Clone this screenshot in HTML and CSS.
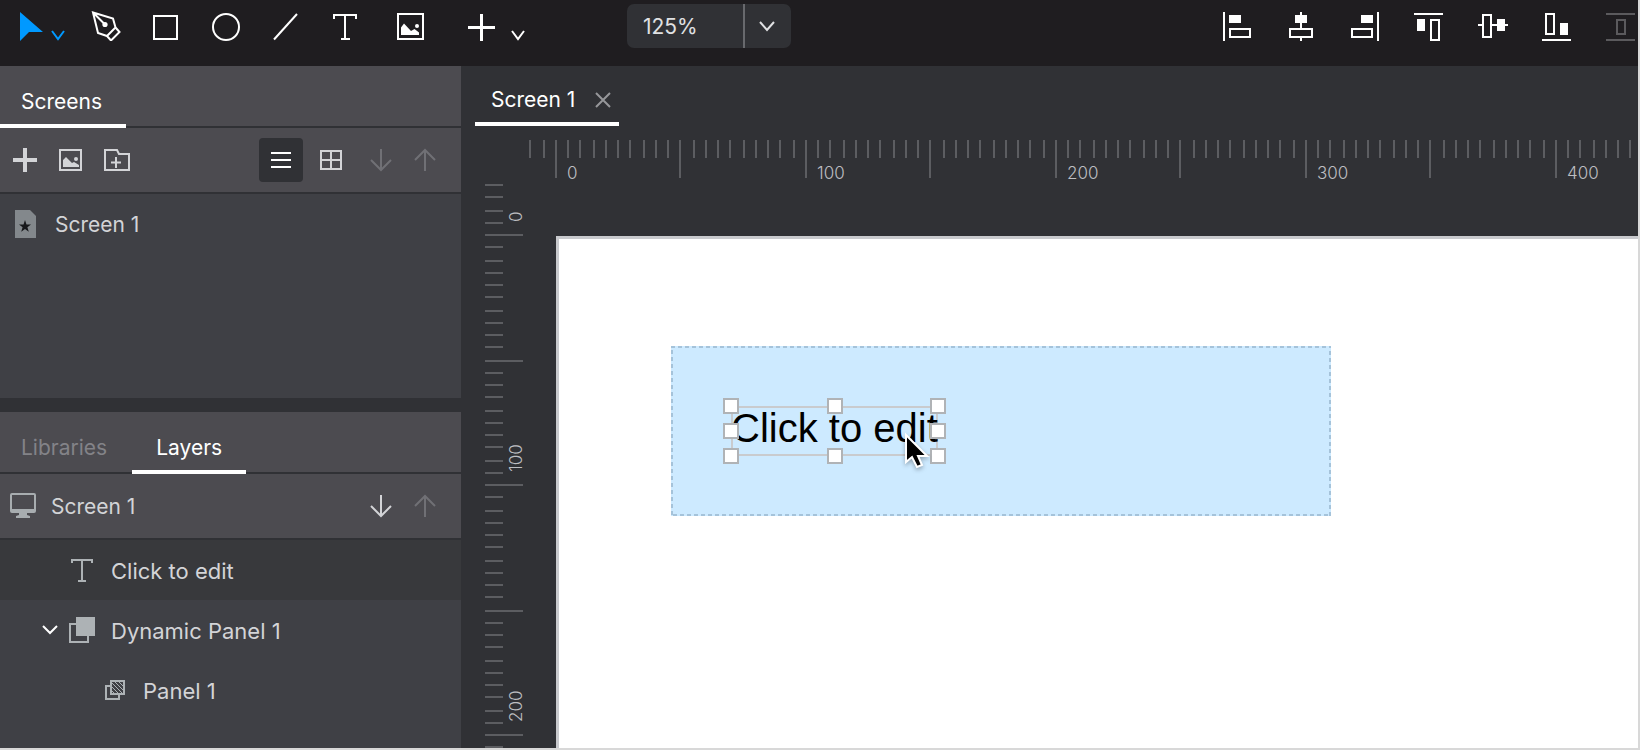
FILE: index.html
```
<!DOCTYPE html>
<html lang="en">
<head>
    <meta charset="UTF-8">
    <meta name="viewport" content="width=device-width, initial-scale=1.0">
    <title>Screen 1</title>
    <link rel="stylesheet" href="styles.css">
</head>
<body>
    <header class="topbar">
        <button class="tool tool-select" aria-label="Select">
            <svg width="30" height="30"><path class="fill" d="M2 1 25 21H11L2 30z"/></svg>
            <svg width="14" height="30"><path d="M1 20l6 8 6-8"/></svg>
        </button>
        <button class="tool" aria-label="Pen">
            <svg width="30" height="30"><path d="M2 1.500 22 7.500 24.500 16.500 16 25 7 22zM2 1.500 13.500 13M24.500 16.500l4 4.500-8.500 8.500-4-4.500"/><circle class="fill" cx="14" cy="13.500" r="2.600"/></svg>
        </button>
        <button class="tool" aria-label="Rectangle">
            <svg width="30" height="30"><rect x="3" y="5" width="23" height="23"/></svg>
        </button>
        <button class="tool" aria-label="Ellipse">
            <svg width="30" height="30"><circle cx="15" cy="16" r="13"/></svg>
        </button>
        <button class="tool" aria-label="Line">
            <svg width="30" height="30"><path d="M3 28.500 26 3"/></svg>
        </button>
        <button class="tool" aria-label="Text">
            <svg width="30" height="30"><path d="M3 8V4h22v4M14 4v24M10 28h9"/></svg>
        </button>
        <button class="tool tool-image" aria-label="Image">
            <svg width="30" height="30"><rect x="3" y="3" width="25" height="25"/><path class="fill" d="M6 24v-7.500l3-4 7 7.500 3.500-2 4.500 3.500V24z"/><circle class="fill" cx="22" cy="15" r="2"/></svg>
        </button>
        <button class="tool tool-insert" aria-label="Insert">
            <svg width="30" height="30"><path class="thick" d="M1 16.500h27M14.500 3v27"/></svg>
            <svg width="14" height="30"><path d="M1 20l6 8 6-8"/></svg>
        </button>
        <div class="zoom">
            <select aria-label="Zoom">
                <option>50%</option>
                <option>100%</option>
                <option selected>125%</option>
                <option>200%</option>
            </select>
            <span class="zoom-arrow"><svg width="16" height="12"><path d="M1 2l7 8 7-8"/></svg></span>
        </div>
        <div class="align">
            <button aria-label="Align left"><svg width="30" height="30"><path d="M2 1v29"/><path class="fill" d="M7 4h12v8H7z"/><rect x="8" y="18" width="20" height="8"/></svg></button>
            <button aria-label="Align center"><svg width="30" height="30"><path d="M15 1v16M15 27v3"/><path class="fill" d="M9 4h12v8H9z"/><rect x="4" y="18" width="22" height="8"/></svg></button>
            <button aria-label="Align right"><svg width="30" height="30"><path d="M28 1v29"/><path class="fill" d="M11 4h12v8H11z"/><rect x="2" y="18" width="20" height="8"/></svg></button>
            <button aria-label="Align top"><svg width="30" height="30"><path d="M0 3h29"/><path class="fill" d="M3 8h8v12H3z"/><rect x="17" y="9" width="8" height="20"/></svg></button>
            <button aria-label="Align middle"><svg width="30" height="30"><path d="M0 14h4M14 14h16"/><path class="fill" d="M19 8h8v12h-8z"/><rect x="5" y="4" width="8" height="22"/></svg></button>
            <button aria-label="Align bottom"><svg width="30" height="30"><path d="M0 29h29"/><path class="fill" d="M18 12h8v12h-8z"/><rect x="4" y="3" width="8" height="20"/></svg></button>
            <button aria-label="Distribute" disabled><svg width="30" height="30"><path d="M0 3h29M0 29h29"/><rect x="11" y="9" width="8" height="14"/></svg></button>
        </div>
    </header>

    <div class="main">
        <aside class="sidebar">
            <section class="panel screens">
                <div class="tabs">
                    <button class="tab active">Screens</button>
                </div>
                <div class="bar">
                    <button aria-label="Add screen"><svg width="24" height="24"><path class="heavy" d="M0 12h24M12 0v24"/></svg></button>
                    <button aria-label="Add image"><svg width="24" height="24"><rect x="1" y="2" width="21" height="20"/><path class="fill" d="M4 19v-7l3-3 6 6 2-1 5 3v2z"/><circle class="fill" cx="17" cy="11" r="2"/></svg></button>
                    <button aria-label="Add folder"><svg width="26" height="24"><path d="M1 2h12l2 4h10v16H1zM12 9v11M7 14.500h10"/></svg></button>
                    <div class="bar-right">
                        <button class="active" aria-label="List view"><svg width="20" height="20"><path d="M0 3h20M0 10h20M0 17h20"/></svg></button>
                        <button aria-label="Grid view"><svg width="22" height="22"><path d="M1 2h20v18H1zM11 2v18M1 11h20"/></svg></button>
                        <div class="arrows">
                            <button aria-label="Move down" disabled><svg width="22" height="24"><path d="M11 1v21M1 12l10 10 10-10"/></svg></button>
                            <button aria-label="Move up" disabled><svg width="22" height="24"><path d="M11 23V2M1 12 11 2l10 10"/></svg></button>
                        </div>
                    </div>
                </div>
                <ul class="list">
                    <li class="row row-screen">
                        <svg width="21" height="28"><path class="page" d="M0 0h15l6 6v22H0z"/><path class="star" d="M10 10l1.500 4.500h4.500l-3.600 2.700 1.400 4.500-3.800-2.700-3.800 2.700 1.400-4.500L4 14.500h4.500z"/></svg>
                        <span>Screen 1</span>
                    </li>
                </ul>
            </section>

            <section class="panel layers">
                <div class="tabs">
                    <button class="tab">Libraries</button>
                    <button class="tab active">Layers</button>
                </div>
                <div class="bar bar-layers">
                    <svg class="monitor" width="26" height="26"><rect x="1" y="1" width="24" height="18" rx="1"/><path class="fill" d="M1 16h24v3H1zM9 19h8v3l3 1v2H6v-2l3-1z"/></svg>
                    <span>Screen 1</span>
                    <div class="bar-right">
                        <div class="arrows">
                            <button aria-label="Move layer down"><svg width="22" height="24"><path d="M11 1v21M1 12l10 10 10-10"/></svg></button>
                            <button aria-label="Move layer up" disabled><svg width="22" height="24"><path d="M11 23V2M1 12 11 2l10 10"/></svg></button>
                        </div>
                    </div>
                </div>
                <ul class="list">
                    <li class="row row-text selected">
                        <svg width="24" height="24"><path d="M2 5V2h20v3M12 2v21M8 23h8"/></svg>
                        <span>Click to edit</span>
                    </li>
                    <li class="row row-dynamic">
                        <button class="toggle" aria-label="Collapse"><svg width="16" height="12"><path d="M1 2l7 7 7-7"/></svg></button>
                        <svg width="26" height="26"><path d="M7 7H1v18h18v-6"/><path class="fill" d="M7 0h19v19H7z"/></svg>
                        <span>Dynamic Panel 1</span>
                    </li>
                    <li class="row row-state">
                        <svg width="20" height="20"><path d="M5 6H1v13h13v-4"/><rect x="6" y="1" width="13" height="13"/><path class="hatch" d="M6 2l12 12M10 2l9 9M14 2l5 5M6 6l8 8M6 10l4 4"/></svg>
                        <span>Panel 1</span>
                    </li>
                </ul>
            </section>
        </aside>

        <main class="workspace">
            <div class="doc-tabs">
                <div class="doc-tab">
                    <span>Screen 1</span>
                    <button aria-label="Close"><svg width="16" height="16"><path d="M1 1l14 14M15 1 1 15"/></svg></button>
                </div>
            </div>
            <svg class="ruler ruler-x" id="ruler-x"></svg>
            <svg class="ruler ruler-y" id="ruler-y"></svg>
            <div class="stage">
                <div class="paper">
                    <div class="dynamic-panel">
                        <svg class="outline" width="100%" height="100%"><rect width="100%" height="100%"/></svg>
                        <div class="text-widget">
                            Click to edit
                            <i class="handle top left"></i>
                            <i class="handle top center"></i>
                            <i class="handle top right"></i>
                            <i class="handle middle left"></i>
                            <i class="handle middle right"></i>
                            <i class="handle bottom left"></i>
                            <i class="handle bottom center"></i>
                            <i class="handle bottom right"></i>
                        </div>
                        <svg class="pointer" width="28" height="40"><path d="M2 3v27l6-5 5 10 5-2-4-9h9z"/></svg>
                    </div>
                </div>
            </div>
        </main>
    </div>

    <script src="script.js"></script>
</body>
</html>
```
FILE: styles.css
```
* {
    margin: 0;
    padding: 0;
    box-sizing: border-box;
}

body {
    font-family: 'Inter', sans-serif;
    font-size: 21px;
    line-height: 28px;
    height: 100vh;
    display: flex;
    flex-direction: column;
    overflow: hidden;
    background: #303135;
    color: #d3d4d7;
    border-right: 2px solid #d8d8d8;
    border-bottom: 2px solid #d8d8d8;
}

button {
    border: none;
    background: none;
    color: inherit;
    font: inherit;
    cursor: pointer;
}

ul {
    list-style: none;
}

svg {
    display: block;
    flex: none;
    fill: none;
    stroke: currentColor;
    stroke-width: 2;
}

svg .fill {
    fill: currentColor;
    stroke: none;
}

svg .thick {
    stroke-width: 3;
}

svg .heavy {
    stroke-width: 4;
}

/* top toolbar */
.topbar {
    display: flex;
    align-items: center;
    flex: none;
    height: 66px;
    padding-bottom: 14px;
    background: #1f1d20;
    color: #fff;
    overflow: hidden;
}

.tool {
    display: flex;
    justify-content: center;
    flex: none;
    width: 60px;
}

.tool-select {
    width: 76px;
    gap: 3px;
    padding-left: 7px;
    color: #0099ff;
}

.tool-image {
    width: 68px;
}

.tool-insert {
    width: 84px;
    gap: 14px;
    padding-left: 20px;
}

.zoom {
    position: relative;
    flex: none;
    width: 164px;
    height: 44px;
    margin-left: 99px;
    color: #e0e1e3;
}

.zoom select {
    appearance: none;
    width: 100%;
    height: 100%;
    padding: 2px 16px 0;
    border: none;
    border-radius: 7px;
    background: #303135;
    color: inherit;
    font: inherit;
}

.zoom-arrow {
    position: absolute;
    top: 0;
    right: 0;
    width: 48px;
    height: 100%;
    display: flex;
    align-items: center;
    justify-content: center;
    padding-right: 2px;
    border-left: 2px solid #68696d;
    pointer-events: none;
}

.align {
    display: flex;
    margin-left: auto;
    margin-right: -15px;
}

.align button {
    display: flex;
    justify-content: center;
    width: 64px;
}

.align button:disabled {
    color: #5b5a5d;
}

.main {
    display: flex;
    flex: 1;
    min-height: 0;
}

/* left sidebar */
.sidebar {
    display: flex;
    flex-direction: column;
    flex: none;
    width: 461px;
    gap: 14px;
}

.panel {
    background: #3f4045;
}

.screens {
    height: 332px;
}

.layers {
    flex: 1;
}

.tabs {
    display: flex;
    gap: 4px;
    height: 62px;
    background: #4c4b50;
    border-bottom: 2px solid #303135;
}

.tab {
    height: 62px;
    padding: 14px 21px 0;
    border-bottom: 4px solid transparent;
    color: #838388;
}

.tab.active {
    border-bottom-color: #fff;
    color: #fff;
}

.screens .tab {
    padding-right: 24px;
}

.layers .tab.active {
    padding: 14px 24px 0;
}

.bar {
    display: flex;
    align-items: center;
    gap: 2px;
    height: 66px;
    padding: 0 14px 0 3px;
    background: #4c4b50;
    border-bottom: 2px solid #303135;
}

.bar button {
    display: flex;
    align-items: center;
    justify-content: center;
    width: 44px;
    height: 44px;
    border-radius: 4px;
}

.bar button.active {
    background: #303135;
    color: #fff;
}

.bar button:disabled {
    color: #707075;
}

.bar-right {
    display: flex;
    gap: 6px;
    margin-left: auto;
}

.arrows {
    display: flex;
}

.bar-layers {
    gap: 15px;
    padding-left: 10px;
}

.bar-layers span,
.row span {
    padding-top: 2px;
}

.monitor {
    color: #a8adb0;
}

.row {
    display: flex;
    align-items: center;
    height: 60px;
}

.row svg {
    color: #adb2b5;
}

.layers .row {
    font-size: 22px;
}

.row-screen {
    gap: 19px;
    padding-left: 15px;
}

.row-screen .page {
    fill: #83888c;
    stroke: none;
}

.row-screen .star {
    fill: #17181b;
    stroke: none;
}

.row-text {
    gap: 17px;
    padding-left: 70px;
}

.row-dynamic {
    gap: 16px;
    padding-left: 42px;
}

.row-state {
    gap: 18px;
    padding-left: 105px;
}

.row.selected {
    background: #38393c;
}

.row .toggle {
    margin-right: -5px;
}

.row .toggle svg {
    color: #fff;
}

.row .hatch {
    stroke-width: 1;
}

/* canvas */
.workspace {
    display: grid;
    grid-template-columns: 24px 42px 1fr;
    grid-template-rows: 60px 14px 44px 1fr;
    flex: 1;
    min-width: 0;
}

.doc-tabs {
    grid-column: 1 / -1;
    padding-left: 14px;
    display: flex;
}

.doc-tab {
    display: flex;
    align-items: center;
    gap: 20px;
    height: 60px;
    padding: 12px 8px 0 16px;
    border-bottom: 4px solid #fff;
    color: #fff;
}

.doc-tab svg {
    color: #96979a;
}

.ruler {
    width: 100%;
    height: 100%;
    overflow: hidden;
    stroke: #5c5d61;
}

.ruler text {
    fill: #bdbec1;
    stroke: none;
    font-size: 17px;
    font-weight: 300;
}

.ruler-x {
    grid-column: 3;
    grid-row: 3;
}

.ruler-y {
    grid-column: 2;
    grid-row: 4;
}

.stage {
    grid-column: 3;
    grid-row: 4;
    padding: 52px 0 0 29px;
    min-height: 0;
    overflow: hidden;
}

.paper {
    position: relative;
    height: 100%;
    background: #fff;
    border-top: 3px solid #c8c9cd;
    border-left: 3px solid #c8c9cd;
}

.dynamic-panel {
    position: absolute;
    left: 112px;
    top: 107px;
    width: 660px;
    height: 170px;
    background: #cdeaff;
}

.outline rect {
    stroke: #a5c3da;
    stroke-width: 4;
    stroke-dasharray: 4 3;
}

.text-widget {
    position: absolute;
    left: 60px;
    top: 60px;
    width: 207px;
    height: 50px;
    border: 2px solid #c9cbce;
    font-family: 'Liberation Sans', sans-serif;
    font-size: 40px;
    line-height: 40px;
    text-indent: -2px;
    color: #000;
    white-space: nowrap;
}

.handle {
    position: absolute;
    width: 16px;
    height: 16px;
    background: #fff;
    border: 2px solid #b0b3b6;
}

.handle.top {
    top: -10px;
}

.handle.middle {
    top: 15px;
}

.handle.bottom {
    bottom: -10px;
}

.handle.left {
    left: -10px;
}

.handle.center {
    left: 94px;
}

.handle.right {
    right: -10px;
}

.pointer {
    position: absolute;
    left: 233px;
    top: 86px;
    filter: drop-shadow(0 2px 2px rgba(0, 0, 0, 0.3));
}

.pointer path {
    fill: #000;
    stroke: #fff;
}
```
FILE: script.js
```
const SVG_NS = 'http://www.w3.org/2000/svg';
const STEP = 12.5; // 5 units at 125%

function add(parent, name, attrs, text) {
    const el = document.createElementNS(SVG_NS, name);
    for (const key in attrs) {
        el.setAttribute(key, attrs[key]);
    }
    if (text !== undefined) {
        el.textContent = text;
    }
    parent.appendChild(el);
}

function drawRuler(id, origin, vertical) {
    const svg = document.getElementById(id);
    const size = vertical ? svg.clientHeight : svg.clientWidth;
    svg.innerHTML = '';
    for (let i = Math.ceil(-origin / STEP); origin + i * STEP < size; i++) {
        // ticks are two pixels wide and sit on even pixels
        const half = i * STEP / 2;
        const pos = origin + 2 * (vertical ? Math.round(half) : Math.ceil(half - 0.5)) + 1;
        const length = i % 10 === 0 ? 38 : 18;
        add(svg, 'path', { d: vertical ? `M0 ${pos}h${length}` : `M${pos} 0v${length}` });
        if (i % 20 === 0) {
            const attrs = vertical
                ? { transform: `translate(37 ${pos - 13}) rotate(-90)` }
                : { x: pos + 11, y: 39 };
            add(svg, 'text', attrs, i * 5);
        }
    }
}

function drawRulers() {
    drawRuler('ruler-x', 28, false);
    drawRuler('ruler-y', 50, true);
}

drawRulers();
window.addEventListener('resize', drawRulers);
```
